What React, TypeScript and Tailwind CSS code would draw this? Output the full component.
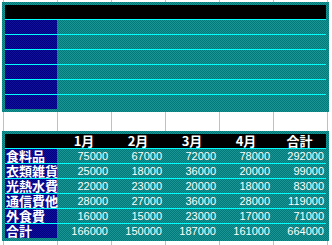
import React from "react";

const teal =
  "bg-[image:conic-gradient(#1c9494_25%,#007a7a_0_50%,#1c9494_0_75%,#007a7a_0)] bg-[length:2px_2px]";
const navy =
  "bg-[image:conic-gradient(#10109a_25%,#000080_0_50%,#10109a_0_75%,#000080_0)] bg-[length:2px_2px]";

const rows: [string, number[]][] = [
  ["食料品", [75000, 67000, 72000, 78000, 292000]],
  ["衣類雑貨", [25000, 18000, 36000, 20000, 99000]],
  ["光熱水費", [22000, 23000, 20000, 18000, 83000]],
  ["通信費他", [28000, 27000, 36000, 28000, 119000]],
  ["外食費", [16000, 15000, 23000, 17000, 71000]],
  ["合計", [166000, 150000, 187000, 161000, 664000]],
];

const headers = ["1月", "2月", "3月", "4月", "合計"];
const cols = "grid grid-cols-[52px_54px_54px_54px_54px_53px]";
const jp = "font-['Noto_Sans_CJK_JP',sans-serif]";

function TopPanel() {
  return (
    <div className={`w-[327px] h-[110px] p-[3px] ${teal}`}>
      <div className="flex flex-col">
        <div className="h-[14px] bg-black" />
        {rows.map((_, i) => (
          <React.Fragment key={i}>
            <div className="h-px bg-[#00ffff]" />
            <div className="h-[14px] flex">
              <div className={`w-[52px] ${navy}`} />
            </div>
          </React.Fragment>
        ))}
      </div>
    </div>
  );
}

function BottomPanel() {
  return (
    <div className={`w-[327px] h-[110px] p-[3px] ${teal}`}>
      <div className="flex flex-col">
        <div className={`${cols} h-[14px] bg-black`}>
          <div />
          {headers.map((h) => (
            <div
              key={h}
              className={`${jp} text-white font-bold text-[13px] leading-[14px] text-center`}
            >
              {h}
            </div>
          ))}
        </div>
        {rows.map(([label, vals]) => (
          <React.Fragment key={label}>
            <div className="h-px bg-[#00ffff]" />
            <div className={`${cols} h-[14px]`}>
              <div
                className={`${navy} ${jp} pl-px text-white font-bold text-[13px] leading-[14px] whitespace-nowrap`}
              >
                {label}
              </div>
              {vals.map((v, j) => (
                <div
                  key={j}
                  className={`font-['Liberation_Sans',sans-serif] text-white text-[11px] leading-[14px] text-right ${
                    j === 4 ? "pr-[2px]" : "pr-[3px]"
                  }`}
                >
                  {v}
                </div>
              ))}
            </div>
          </React.Fragment>
        ))}
      </div>
    </div>
  );
}

export default function App() {
  return (
    <div className="w-[332px] h-[245px] overflow-hidden bg-white bg-[image:linear-gradient(to_right,#c0c0c0_1px,transparent_1px)] bg-[length:54px_100%] bg-[position:3px_0] pt-[2px] pl-[2px]">
      <TopPanel />
      <div className="mt-[19px]">
        <BottomPanel />
      </div>
    </div>
  );
}
